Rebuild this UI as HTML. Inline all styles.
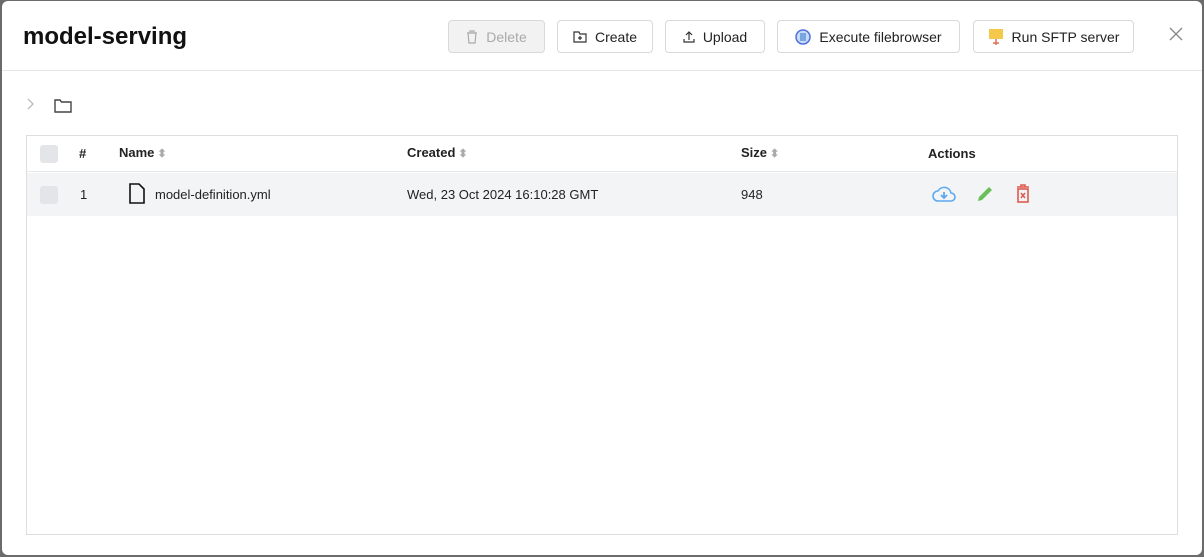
<!DOCTYPE html>
<html><head><style>
*{box-sizing:border-box;margin:0;padding:0}
body{width:1204px;height:557px;background:#6b6b6b;font-family:"Liberation Sans",sans-serif;overflow:hidden;position:relative}
.m{position:absolute;left:2px;top:1px;width:1200px;height:554px;background:#fff;border-radius:6px}
.hd{position:absolute;left:0;top:0;width:1200px;height:70px;border-bottom:1px solid #e5e7eb}
h1{position:absolute;left:21px;top:22px;font-size:24px;font-weight:bold;color:#111}
.b{position:absolute;top:19px;height:33px;border:1px solid #d9d9d9;border-radius:4px;font-size:14px;color:#222;display:flex;align-items:center;justify-content:center;gap:8px;background:#fff}
.x{position:absolute;left:1167px;top:26px}
.tb{position:absolute;left:24px;top:134px;width:1152px;height:400px;border:1px solid #dedede}
.r{position:absolute;left:0;width:100%;font-size:13px;color:#222}
.r span{position:absolute}
.s{position:static!important;color:#aaa;font-size:11px;margin-left:3px}
.cb{width:18px;height:18px;border-radius:3px;background:#e3e5e8}
</style></head><body>
<div class="m">
<div class="hd">
<h1>model-serving</h1>
<div class="b" style="left:446px;width:97px;background:#f2f2f2;color:#aaa">
<svg width="12" height="14" viewBox="0 0 12 14" fill="none" stroke="#aaa" stroke-width="1.2"><path d="M1 3h10M4 3V1h4v2M2 3l1 10h6l1-10"/></svg>Delete</div>
<div class="b" style="left:555px;width:96px"><svg width="14" height="12" viewBox="0 0 14 12" fill="none" stroke="#333" stroke-width="1.2"><path d="M1 1h5l1 2h6v8H1z M7 5v4M5 7h4"/></svg>Create</div>
<div class="b" style="left:663px;width:100px"><svg width="12" height="12" viewBox="0 0 12 12" fill="none" stroke="#333" stroke-width="1.2"><path d="M6 9V1M3 4l3-3 3 3M1 8v3h10V8"/></svg>Upload</div>
<div class="b" style="left:775px;width:183px"><svg width="16" height="16"><circle cx="8" cy="8" r="7" fill="#c9dcf5" stroke="#4f6fe0" stroke-width="1.5"/><rect x="5" y="4" width="6" height="8" fill="#7aa6e0"/></svg>Execute filebrowser</div>
<div class="b" style="left:971px;width:161px"><svg width="16" height="18"><rect x="1" y="1" width="14" height="10" fill="#f5c84c"/><path d="M8 11v6M5 15h6" stroke="#e07050" stroke-width="1.5"/></svg>Run SFTP server</div>
<svg class="x" width="14" height="14"><path d="M1 1l12 12M13 1L1 13" stroke="#888" stroke-width="1.3"/></svg>
</div>
<svg style="position:absolute;left:25px;top:97px" width="8" height="12"><path d="M1 1l5 5-5 5" fill="none" stroke="#bbb" stroke-width="1.3"/></svg>
<svg style="position:absolute;left:52px;top:98px" width="18" height="14"><path d="M1 1h5l1.5 2H17v10H1z" fill="none" stroke="#444" stroke-width="1.4"/></svg>
<div class="tb">
<div class="r" style="top:0;height:36px;border-bottom:1px solid #e5e7eb;font-weight:bold">
<span class="cb" style="left:13px;top:9px"></span>
<span style="left:52px;top:10px">#</span>
<span style="left:92px;top:9px">Name<span class="s">⬍</span></span>
<span style="left:380px;top:9px">Created<span class="s">⬍</span></span>
<span style="left:714px;top:9px">Size<span class="s">⬍</span></span>
<span style="left:901px;top:10px">Actions</span>
</div>
<div class="r" style="top:37px;height:43px;background:#f3f4f6">
<span class="cb" style="left:13px;top:13px"></span>
<span style="left:53px;top:14px">1</span>
<svg style="position:absolute;left:102px;top:10px" width="16" height="21"><path d="M1 1h9l5 5v14H1z" fill="none" stroke="#111" stroke-width="1.6"/></svg>
<span style="left:128px;top:14px">model-definition.yml</span>
<span style="left:380px;top:14px">Wed, 23 Oct 2024 16:10:28 GMT</span>
<span style="left:714px;top:14px">948</span>
<svg style="position:absolute;left:905px;top:12px" width="24" height="18"><path d="M6 16a5 5 0 0 1 0-10 7 7 0 0 1 13 2 4 4 0 0 1 0 8z" fill="none" stroke="#5aa9f0" stroke-width="1.6"/><path d="M12 7v6M9 10l3 3 3-3" fill="none" stroke="#5aa9f0" stroke-width="1.8"/></svg>
<svg style="position:absolute;left:948px;top:11px" width="20" height="20"><path d="M3 17l1-4L14 3l3 3L7 16z" fill="#6bbf5a"/></svg>
<svg style="position:absolute;left:989px;top:11px" width="14" height="20"><path d="M1 3h12M5 3V1h4v2" stroke="#e05a50" stroke-width="1.6" fill="none"/><rect x="2" y="5" width="10" height="13" fill="none" stroke="#e05a50" stroke-width="1.6"/><path d="M5 9l4 5M9 9l-4 5" stroke="#e05a50" stroke-width="1.5"/></svg>
</div>
</div>
</div>
</body></html>
